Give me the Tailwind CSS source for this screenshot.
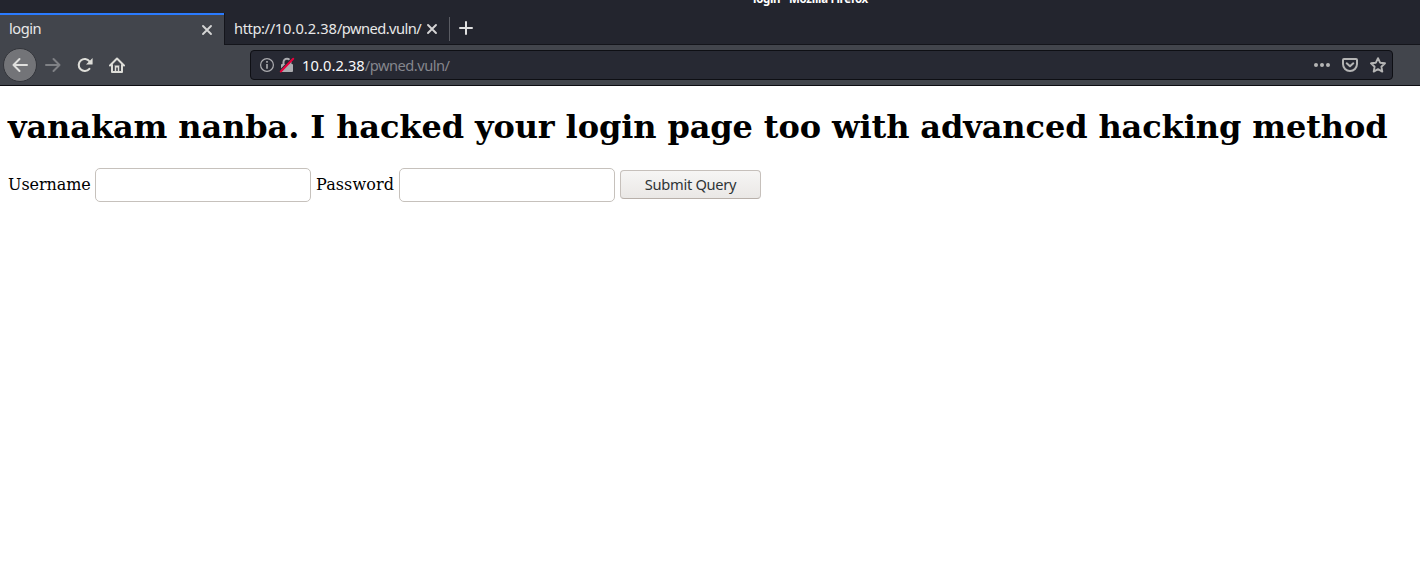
<!DOCTYPE html>
<html lang="en">
<head>
<meta charset="utf-8">
<title>login</title>
<script src="https://cdn.jsdelivr.net/npm/@tailwindcss/browser@4"></script>
</head>
<body class="h-[582px] w-[1420px] overflow-hidden bg-white font-['Noto_Sans',sans-serif]">
<header class="flex h-[86px] flex-col bg-[#23252e] text-[14.67px]">
  <div class="flex h-[13px] items-end overflow-hidden pb-[6px] pl-[753px] text-[11.5px] leading-[16px] font-bold text-white"><span class="whitespace-nowrap tracking-[-0.3px]">login - Mozilla Firefox</span></div>
  <div class="flex h-8 shrink-0">
    <div class="flex w-56 items-center justify-between border-t-2 border-[#2a7bff] bg-[#42454c] pr-[11px] pl-[9px] text-[#e8e8e8]">
      <span class="-mt-[5px] tracking-[-0.5px]">login</span>
      <svg class="h-3 w-3" viewBox="0 0 12 12" fill="none" stroke="#d5d5d5" stroke-width="1.900" stroke-linecap="round"><path d="M2 2l8 8M10 2l-8 8"/></svg>
    </div>
    <div class="flex flex-1 items-center border-b border-l border-[#14151b] pt-px text-[#e8e8e8]">
      <span class="-mt-[2px] ml-[9px] w-[192px] whitespace-nowrap"><span class="tracking-[-0.4px]">http://</span><span class="tracking-[0.02px]">10.0.2.38</span><span class="tracking-[-0.55px]">/pwned.vuln/</span></span>
      <svg class="h-3 w-3" viewBox="0 0 12 12" fill="none" stroke="#d5d5d5" stroke-width="1.900" stroke-linecap="round"><path d="M2 2l8 8M10 2l-8 8"/></svg>
      <div class="ml-[11px] h-6 w-px bg-[#5a5c63]"></div>
      <svg class="ml-[8px] h-4 w-4" viewBox="0 0 16 16" fill="none" stroke="#e0e0e0" stroke-width="2" stroke-linecap="round"><path d="M8 1v12M2 7h12"/></svg>
    </div>
  </div>
  <div class="flex h-[41px] shrink-0 items-center border-b border-[#0c0c11] bg-[#42454c] pl-[3px]">
    <div class="flex h-[34px] w-[34px] items-center justify-center rounded-full border border-[#33353b] bg-[#737478]">
      <svg class="h-4 w-4" viewBox="0 0 16 16" fill="none" stroke="#e0e0de" stroke-width="2" stroke-linecap="round" stroke-linejoin="round"><path d="M15 8H1.500M7.500 2l-6 6 6 6"/></svg>
    </div>
    <svg class="ml-2 h-4 w-4" viewBox="0 0 16 16" fill="none" stroke="#7f8185" stroke-width="2" stroke-linecap="round" stroke-linejoin="round"><path d="M1 8h13.500M8.500 2l6 6-6 6"/></svg>
    <svg class="ml-4 h-4 w-4" viewBox="0 0 16 16" fill="none" stroke="#deded9" stroke-width="2.100" stroke-linecap="round"><path d="M12.400 11.800A6 6 0 1 1 12.600 4.500"/><path fill="#deded9" stroke="none" d="M15.600 1v5.900a.6.600 0 0 1-.6.600H9z"/></svg>
    <svg class="ml-4 h-4 w-4" viewBox="0 0 16 16" fill="none" stroke="#deded9" stroke-width="2" stroke-linecap="round" stroke-linejoin="round"><path d="M1 8.500L8 1.500l7 7M3 8v7h10V8"/><path stroke="none" fill="#deded9" d="M5.500 8.500h5V15h-5z"/><path stroke="none" fill="#42454c" d="M7.200 10.500h1.600V14H7.200zM4 9h1.500v5H4zM10.500 9H12v5h-1.500z"/></svg>
    <div class="ml-[125px] flex h-[30px] w-[1143px] items-center rounded-[4px] border border-[#0e0f14] bg-[#272933] pr-[6px] pl-[8px]">
      <svg class="h-4 w-4" viewBox="0 0 16 16" fill="none" stroke="#acacb0" stroke-width="1.200"><circle cx="8" cy="8" r="6.400"/><path stroke-width="1.600" d="M8 7v4.700M8 4v1.700"/></svg>
      <svg class="ml-[4px] h-4 w-4" viewBox="0 0 16 16" fill="none"><path stroke="#acacb0" stroke-width="2" d="M4.500 8V5.300a3.500 3.500 0 0 1 7 0V8"/><rect x="2" y="7" width="12" height="8" rx="1" fill="#acacb0"/><path stroke="#272933" stroke-width="1.500" d="M.5 14L13.500 .8"/><path stroke="#e8003c" stroke-width="2" stroke-linecap="round" d="M1.800 14.500L14.200 1.800"/></svg>
      <span class="ml-[7px] whitespace-nowrap text-[#85868d]"><span class="tracking-[0.08px] text-[#f9f9fa]">10.0.2.38</span><span class="tracking-[-0.5px]">/pwned.vuln/</span></span>
      <svg class="ml-auto h-4 w-4" viewBox="0 0 16 16" fill="#b5b5b5"><circle cx="2" cy="8" r="2"/><circle cx="8" cy="8" r="2"/><circle cx="14" cy="8" r="2"/></svg>
      <svg class="ml-3 h-4 w-4" viewBox="0 0 16 16" fill="none" stroke="#b5b5b5" stroke-width="2" stroke-linecap="round" stroke-linejoin="round"><path d="M2 2h12a1 1 0 0 1 1 1v4A7 7 0 0 1 1 7V3a1 1 0 0 1 1-1zM4.700 6.300L8 9.300l3.300-3"/></svg>
      <svg class="ml-3 h-4 w-4" viewBox="0 0 16 16" fill="none" stroke="#b5b5b5" stroke-width="1.900" stroke-linejoin="round"><path d="M8 1.200l2.100 4.500 4.900.6-3.600 3.400.9 4.900L8 12.200l-4.300 2.400.9-4.900L1 6.300l4.900-.6z"/></svg>
    </div>
  </div>
</header>
<main class="px-2 pt-[22px] font-['DejaVu_Serif',serif] text-black">
  <h1 class="text-[32px] leading-[38px] font-bold tracking-[-0.108px] whitespace-nowrap">vanakam nanba. I hacked your login page too with advanced hacking method</h1>
  <form class="mt-[22px] flex h-[34px] items-center text-[16px] leading-[19px]">
    <label class="-mt-[2px] w-[87px] tracking-[-0.08px]" for="u">Username</label>
    <input id="u" class="h-[34px] w-[216px] rounded-[5px] border border-[#c6c1bc] bg-white">
    <label class="-mt-[2px] ml-[5px] w-[83px] tracking-[0.1px]" for="p">Password</label>
    <input id="p" type="password" class="h-[34px] w-[216px] rounded-[5px] border border-[#c6c1bc] bg-white">
    <button type="button" class="-mt-px mb-px ml-[5px] h-[29px] w-[141px] rounded-[4px] border border-[#c6c0bb] border-b-[#b8b0aa] bg-linear-to-b from-[#f6f5f4] to-[#eae8e6] font-['Noto_Sans',sans-serif] text-[14.67px] leading-none tracking-[-0.3px] text-[#2e3436]">Submit Query</button>
  </form>
</main>
</body>
</html>
